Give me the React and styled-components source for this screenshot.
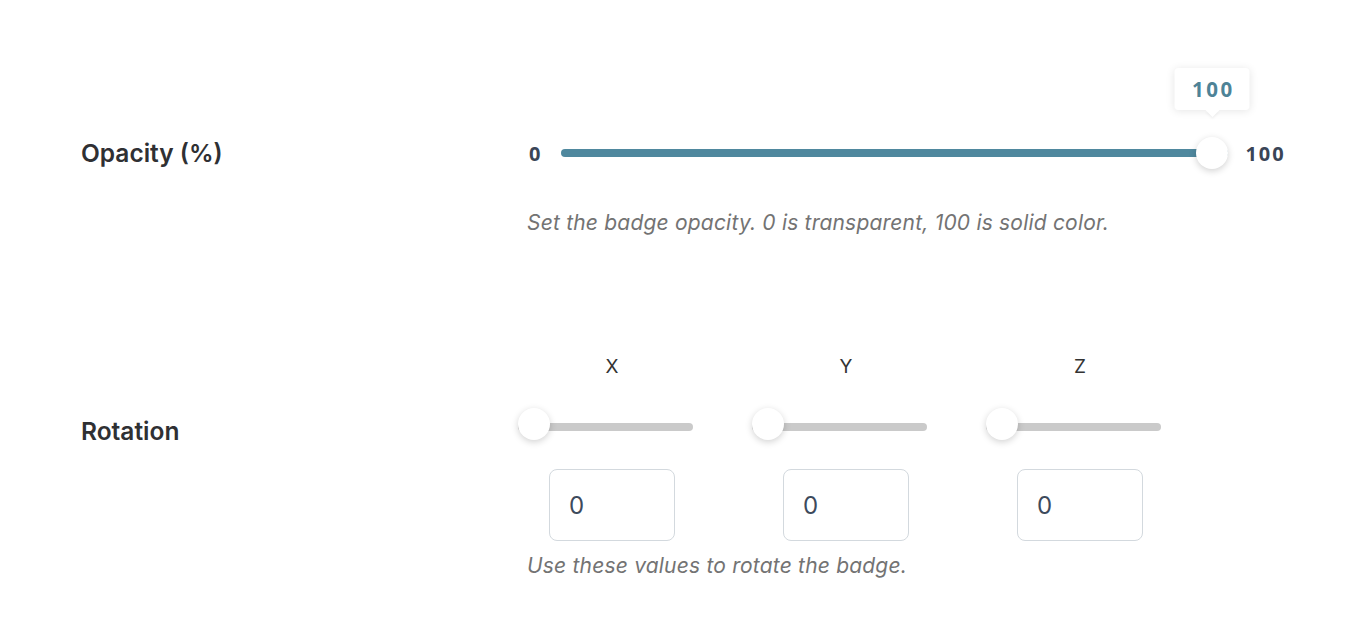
import React from "react";
import styled, { createGlobalStyle } from "styled-components";

const Global = createGlobalStyle`
  html, body { margin: 0; padding: 0; background: #fff; }
  body { font-family: Inter, "Noto Sans", sans-serif; color: #333; }
`;

const Page = styled.div`
  padding: 137px 0 0 81px;
  width: 1352px;
  box-sizing: border-box;
`;

const Section = styled.section`
  display: grid;
  grid-template-columns: 437px 1fr;
  margin-bottom: ${(p) => p.$gap || 0}px;
`;

const Heading = styled.h3`
  margin: 0;
  padding-top: ${(p) => p.$offset || 0}px;
  font-size: 24.5px;
  font-weight: 600;
  line-height: 32px;
  color: #2f3033;
`;

const Control = styled.div`
  display: flex;
  flex-direction: column;
`;

const SliderRow = styled.div`
  display: flex;
  align-items: center;
  height: 32px;
  padding-left: 11px;
`;

const EndLabel = styled.span`
  font-family: "Open Sans", sans-serif;
  font-weight: 700;
  font-size: 20px;
  color: #3a4557;
  letter-spacing: 2px;
  margin: ${(p) => p.$margin};
`;

const Track = styled.div`
  position: relative;
  width: ${(p) => p.$width}px;
  height: 8px;
  border-radius: 4px;
  background: ${(p) => (p.$filled ? "#4f889e" : "#cacaca")};
  margin-top: ${(p) => p.$drop || 0}px;
`;

const Thumb = styled.div`
  position: absolute;
  top: 50%;
  width: 32px;
  height: 32px;
  margin-top: ${(p) => -16 - (p.$lift || 0)}px;
  border-radius: 50%;
  background: #fff;
  box-shadow: 0 2px 7px rgba(0, 0, 0, 0.18);
  ${(p) => (p.$end ? "right: 0;" : "left: 0;")}
`;

const Tooltip = styled.div`
  position: absolute;
  bottom: 59px;
  left: 50%;
  transform: translateX(-50%);
  width: 75px;
  height: 42px;
  background: #fff;
  border-radius: 4px;
  box-shadow: 0 1px 8px rgba(0, 0, 0, 0.1);
  display: flex;
  align-items: center;
  justify-content: center;
  padding-left: 2px;
  box-sizing: border-box;
  font-family: "Open Sans", sans-serif;
  font-weight: 700;
  font-size: 20.5px;
  letter-spacing: 2.5px;
  color: #4e8397;

  &::after {
    content: "";
    position: absolute;
    bottom: -7px;
    left: 50%;
    margin-left: -7px;
    border-left: 7px solid transparent;
    border-right: 7px solid transparent;
    border-top: 7px solid #fff;
    filter: drop-shadow(0 2px 1px rgba(0, 0, 0, 0.05));
  }
`;

const Help = styled.p`
  margin: ${(p) => p.$top}px 0 0 9px;
  font-size: 21px;
  line-height: 28px;
  font-style: italic;
  color: #737373;
  letter-spacing: 0.2px;
`;

const Axes = styled.div`
  display: flex;
  gap: 46px;
`;

const Axis = styled.div`
  width: 188px;
  display: flex;
  flex-direction: column;
  align-items: center;
`;

const AxisName = styled.span`
  font-size: 19px;
  line-height: 24px;
  color: #333;
  margin-bottom: 30px;
`;

const AxisSlider = styled.div`
  align-self: flex-start;
  height: 32px;
  display: flex;
  align-items: center;
`;

const NumberBox = styled.div`
  box-sizing: border-box;
  width: 126px;
  height: 72px;
  margin-top: 28px;
  border: 1px solid #d3d9de;
  border-radius: 8px;
  display: flex;
  align-items: center;
  padding-left: 19px;
  font-size: 24px;
  color: #3d4a5c;
`;

function OpacitySlider() {
  return (
    <SliderRow>
      <EndLabel $margin="0 19px 0 0">0</EndLabel>
      <Track $width={667} $filled>
        <Thumb $end>
          <Tooltip>100</Tooltip>
        </Thumb>
      </Track>
      <EndLabel $margin="0 0 0 17px">100</EndLabel>
    </SliderRow>
  );
}

function AxisControl({ name }) {
  return (
    <Axis>
      <AxisName>{name}</AxisName>
      <AxisSlider>
        <Track $width={175} $drop={3}>
          <Thumb $lift={3} />
        </Track>
      </AxisSlider>
      <NumberBox>0</NumberBox>
    </Axis>
  );
}

export default function App() {
  return (
    <>
      <Global />
      <Page>
        <Section $gap={118}>
          <Heading>Opacity (%)</Heading>
          <Control>
            <OpacitySlider />
            <Help $top={40}>
              Set the badge opacity. 0 is transparent, 100 is solid color.
            </Help>
          </Control>
        </Section>
        <Section>
          <Heading $offset={60}>Rotation</Heading>
          <Control>
            <Axes>
              {["X", "Y", "Z"].map((n) => (
                <AxisControl key={n} name={n} />
              ))}
            </Axes>
            <Help $top={11}>Use these values to rotate the badge.</Help>
          </Control>
        </Section>
      </Page>
    </>
  );
}
